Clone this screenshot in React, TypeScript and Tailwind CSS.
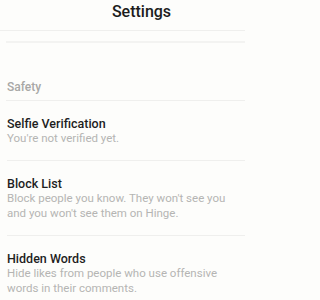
const items = [
  { title: "Selfie Verification", description: "You're not verified yet." },
  {
    title: "Block List",
    description: "Block people you know. They won't see you and you won't see them on Hinge.",
  },
  {
    title: "Hidden Words",
    description: "Hide likes from people who use offensive words in their comments.",
  },
]

function SettingsRow({ title, description }: { title: string; description: string }) {
  return (
    <div className="ml-[7px] border-b border-[#efefed] pt-[15px] pb-[13px]">
      <div className="text-[12.5px] leading-[15px] font-medium text-[#1e1e1e]">{title}</div>
      <div className="text-[11.5px] leading-[15.5px] text-[#b5b5b3]">{description}</div>
    </div>
  )
}

export default function App() {
  return (
    <div
      className="min-h-screen w-full bg-[#fdfdfb]"
      style={{ fontFamily: "Roboto, 'Noto Sans', sans-serif" }}
    >
      <div className="w-[245px] overflow-hidden">
        <header className="flex justify-center border-b border-[#efefed] pt-[2px] pb-[8px] pl-[38px]">
          <h1 className="text-[16px] leading-[20px] font-medium text-[#1c1c1c]">Settings</h1>
        </header>

        <div className="mt-[10px] ml-[6px] h-[2px] bg-[#f3f3f1]" />

        <section className="mt-[36px]">
          <div className="ml-[6px] border-b border-[#efefed] pb-[5px] pl-px text-[12px] leading-[16px] font-medium text-[#a8a8a6]">
            Safety
          </div>
          {items.map((item) => (
            <SettingsRow key={item.title} title={item.title} description={item.description} />
          ))}
        </section>
      </div>
    </div>
  )
}
